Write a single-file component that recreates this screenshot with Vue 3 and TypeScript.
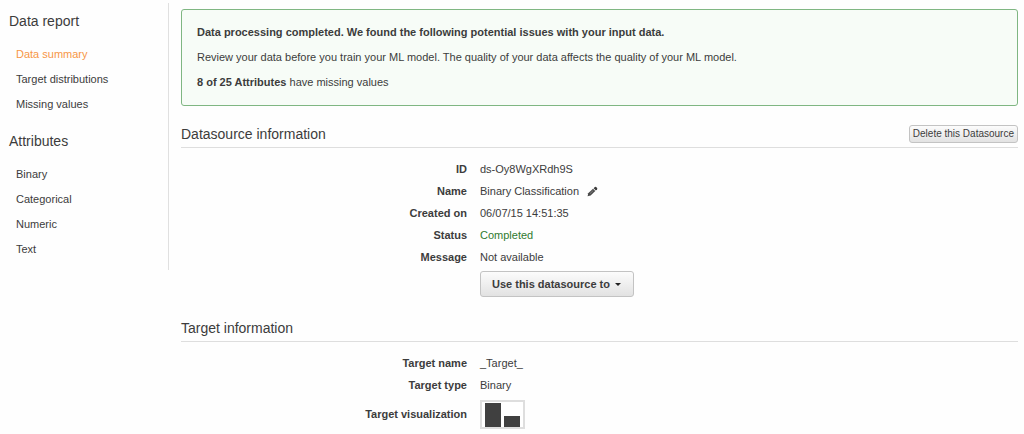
<script setup lang="ts">
interface NavItem {
  label: string
  href: string
  current?: boolean
}
interface NavGroup {
  title: string
  items: NavItem[]
}

const groups: NavGroup[] = [
  {
    title: 'Data report',
    items: [
      { label: 'Data summary', href: '#summary', current: true },
      { label: 'Target distributions', href: '#distributions' },
      { label: 'Missing values', href: '#missing' },
    ],
  },
  {
    title: 'Attributes',
    items: [
      { label: 'Binary', href: '#binary' },
      { label: 'Categorical', href: '#categorical' },
      { label: 'Numeric', href: '#numeric' },
      { label: 'Text', href: '#text' },
    ],
  },
]
</script>

<template>
  <div class="page">
    <nav class="sidebar" aria-label="Data report">
      <section v-for="group in groups" :key="group.title" class="group">
        <h2 class="title">{{ group.title }}</h2>
        <ul class="links">
          <li v-for="item in group.items" :key="item.label">
            <a
              :href="item.href"
              :class="{ current: item.current }"
              :aria-current="item.current ? 'page' : undefined"
            >{{ item.label }}</a>
          </li>
        </ul>
      </section>
    </nav>

    <main class="main">
      <div class="alert" role="status">
        <p><strong>Data processing completed. We found the following potential issues with your input data.</strong></p>
        <p>Review your data before you train your ML model. The quality of your data affects the quality of your ML model.</p>
        <p><strong>8 of 25 Attributes</strong> have missing values</p>
      </div>

      <section>
        <header class="section-head">
          <h2 class="title">Datasource information</h2>
          <button type="button" class="btn btn-small">Delete this Datasource</button>
        </header>
        <dl class="details">
          <dt>ID</dt>
          <dd>ds-Oy8WgXRdh9S</dd>
          <dt>Name</dt>
          <dd class="name">
            Binary Classification
            <button type="button" class="edit" aria-label="Edit name">
              <svg width="11" height="11" viewBox="0 0 11 11" aria-hidden="true">
                <path d="M0.6 10.2 L1.2 7.3 L6 2.8 L8.3 5.1 L3.6 9.6 Z" fill="#4a4a4a" />
                <path d="M6.6 2.2 L7.9 1 Q8.5 0.6 9.1 1.1 L10.1 2.1 Q10.5 2.7 10.1 3.3 L8.9 4.5 Z" fill="#3c3c3c" />
                <path d="M3 7.6 L6.2 4.5" stroke="#a5a5a5" stroke-width="0.6" fill="none" />
              </svg>
            </button>
          </dd>
          <dt>Created on</dt>
          <dd>06/07/15 14:51:35</dd>
          <dt>Status</dt>
          <dd class="ok">Completed</dd>
          <dt>Message</dt>
          <dd>Not available</dd>
          <dd class="action">
            <button type="button" class="btn btn-large" aria-haspopup="menu">
              Use this datasource to
              <span class="caret" aria-hidden="true"></span>
            </button>
          </dd>
        </dl>
      </section>

      <section>
        <header class="section-head second">
          <h2 class="title">Target information</h2>
        </header>
        <dl class="details">
          <dt>Target name</dt>
          <dd>_Target_</dd>
          <dt>Target type</dt>
          <dd>Binary</dd>
          <dt class="tall">Target visualization</dt>
          <dd class="tall">
            <svg class="chart" width="45" height="29" viewBox="0 0 45 29" role="img" aria-label="Target distribution">
              <rect x="1" y="1" width="43" height="27" fill="#fff" stroke="#dedede" stroke-width="2" />
              <rect x="5" y="3" width="16" height="24" fill="#404040" />
              <rect x="24" y="16" width="16" height="11" fill="#404040" />
            </svg>
          </dd>
        </dl>
      </section>
    </main>
  </div>
</template>

<style>
body {
  margin: 0;
  background: #fefefe;
}
</style>

<style scoped>
.page {
  display: flex;
  align-items: flex-start;
  gap: 12px;
  padding: 0 6px 0 0;
  font-family: "Liberation Sans", Arial, sans-serif;
  font-size: 11px;
  line-height: 22px;
  color: #3c3c3c;
}
.sidebar {
  flex: 0 0 159px;
  margin-top: 3px;
  padding: 8px 0 8px 9px;
  border-right: 1px solid #e0e0e0;
}
.group + .group {
  margin-top: 14px;
}
.title {
  margin: 0;
  font-size: 14px;
  line-height: 20px;
  font-weight: 400;
}
.links {
  list-style: none;
  margin: 11px 0 0;
  padding: 0 0 0 7px;
  line-height: 25px;
}
.links a {
  display: block;
  color: inherit;
  text-decoration: none;
}
.links a.current {
  color: #f79646;
}
.main {
  flex: 1;
  min-width: 0;
}
.alert {
  margin-top: 9px;
  padding: 10px 15px;
  border: 1px solid #7fb682;
  border-radius: 3px;
  background: #f7fcf7;
  line-height: 25px;
}
.alert p {
  margin: 0;
}
.section-head {
  display: flex;
  align-items: center;
  justify-content: space-between;
  margin-top: 18px;
  padding-bottom: 3px;
  border-bottom: 1px solid #dedede;
}
.section-head.second {
  margin-top: 21px;
}
.btn {
  box-sizing: border-box;
  font-family: inherit;
  color: #3c3c3c;
  border: 1px solid #c3c3c3;
  border-radius: 3px;
  background: linear-gradient(#fcfcfc, #e2e2e2);
}
.btn-small {
  height: 18px;
  padding: 0 3px;
  font-size: 10px;
  line-height: 16px;
}
.btn-large {
  display: flex;
  align-items: center;
  gap: 5px;
  height: 26px;
  padding: 0 12px 0 11px;
  font-size: 11px;
  font-weight: 700;
}
.caret {
  border: 3px solid transparent;
  border-top-color: #222;
  border-bottom-width: 0;
}
.details {
  display: grid;
  grid-template-columns: minmax(0, 286px) 1fr;
  column-gap: 13px;
  margin: 10px 0 0;
}
.details dt {
  font-weight: 700;
  text-align: right;
}
.details dd {
  margin: 0;
}
.details .name {
  display: flex;
  align-items: center;
  gap: 8px;
}
.edit {
  display: flex;
  padding: 0;
  border: 0;
  background: none;
}
.details .ok {
  color: #2f7a2f;
}
.details .action {
  grid-column: 2;
  padding-top: 3px;
}
.details .tall {
  padding-top: 4px;
  line-height: 29px;
}
.chart {
  display: block;
}
</style>
